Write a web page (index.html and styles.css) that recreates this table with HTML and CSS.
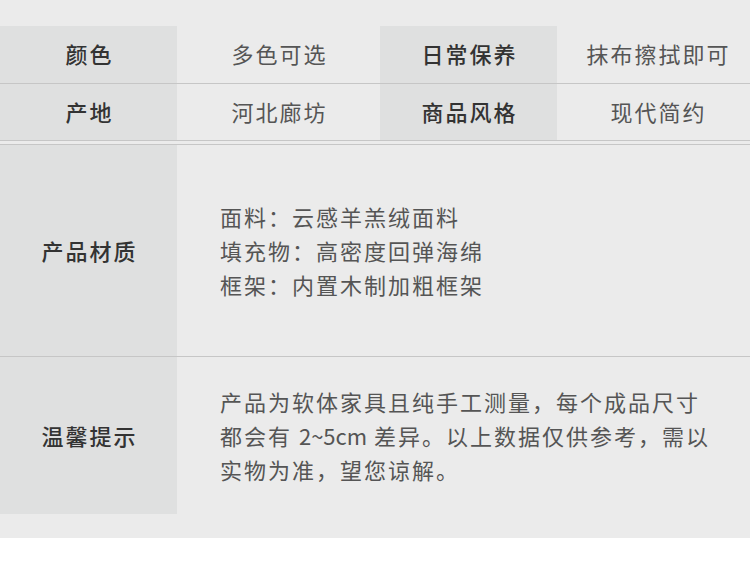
FILE: index.html
```html
<!DOCTYPE html>
<html lang="zh-CN">
<head>
<meta charset="utf-8">
<title>商品参数</title>
<link rel="stylesheet" href="styles.css">
</head>
<body>
<div class="panel">
  <div class="grid-top">
    <div class="row first">
      <div class="label">颜色</div>
      <div class="value">多色可选</div>
      <div class="label">日常保养</div>
      <div class="value">抹布擦拭即可</div>
    </div>
    <div class="row">
      <div class="label">产地</div>
      <div class="value">河北廊坊</div>
      <div class="label">商品风格</div>
      <div class="value">现代简约</div>
    </div>
  </div>
  <div class="grid-bottom">
    <div class="brow material">
      <div class="blabel">产品材质</div>
      <div class="btext">面料：云感羊羔绒面料<br>填充物：高密度回弹海绵<br>框架：内置木制加粗框架</div>
    </div>
    <div class="brow tip">
      <div class="blabel">温馨提示</div>
      <div class="btext">产品为软体家具且纯手工测量，每个成品尺寸都会有 <span class="latin">2~5cm</span> 差异。以上数据仅供参考，需以实物为准，望您谅解。</div>
    </div>
  </div>
</div>
</body>
</html>
```

FILE: styles.css
```css
* { box-sizing: border-box; }
html, body { margin: 0; padding: 0; background: #ffffff; }
body {
  width: 750px;
  font-family: "Noto Sans CJK SC", "Noto Sans", sans-serif;
  font-size: 22px;
  letter-spacing: 2px;
}
.panel {
  background: #ebebeb;
  padding: 26px 0 24px;
}
.grid-top {
  border-bottom: 1px solid #c6c6c6;
  padding-bottom: 3px;
}
.row {
  display: grid;
  grid-template-columns: 177px 203px 177px 1fr;
  height: 57px;
  border-bottom: 1px solid #c6c6c6;
}
.row.first { height: 58px; }
.label, .value {
  display: flex;
  align-items: center;
  justify-content: center;
  padding: 0 0 3px 2px;
}
.label {
  background: #dfe0e0;
  color: #333333;
  font-weight: 500;
}
.value {
  color: #555555;
}
.row .value:last-child { padding-left: 10px; }
.brow {
  display: grid;
  grid-template-columns: 177px 1fr;
}
.brow.material {
  height: 212px;
  border-bottom: 1px solid #c6c6c6;
}
.brow.tip {
  height: 157px;
}
.blabel {
  background: #dfe0e0;
  color: #333333;
  font-weight: 500;
  display: flex;
  align-items: center;
  justify-content: center;
  padding: 0 0 2px 2px;
}
.btext {
  display: flex;
  align-items: center;
  padding: 0 30px 2px 43px;
  color: #555555;
  line-height: 34px;
}
.btext { display: block; align-self: center; }
.latin { letter-spacing: 0; }
```
